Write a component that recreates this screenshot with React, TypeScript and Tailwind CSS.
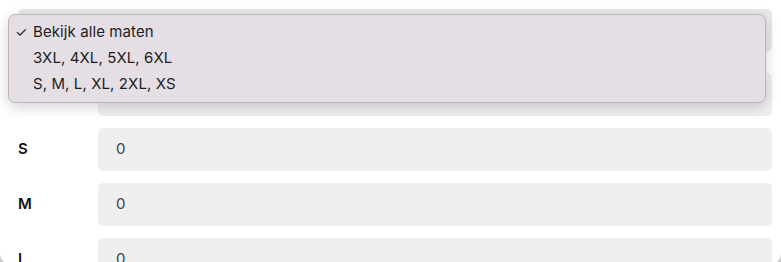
const sizes = ["S", "M", "L"];

const options = [
  { label: "Bekijk alle maten", checked: true },
  { label: "3XL, 4XL, 5XL, 6XL", checked: false },
  { label: "S, M, L, XL, 2XL, XS", checked: false },
];

function Field({ value = "" }: { value?: string }) {
  return (
    <div className="flex-1 h-[43px] rounded-[5px] bg-[#efefef] flex items-center pl-[18px] text-[15px] text-[#444]">
      {value}
    </div>
  );
}

export default function App() {
  return (
    <div className="h-[262px] w-[781px] overflow-hidden bg-[#c9c9c9]" style={{ fontFamily: "Inter, 'Noto Sans', sans-serif" }}>
      <div className="relative h-[264px] overflow-hidden bg-white rounded-b-[10px] pl-[18px] pr-[9px] pt-[9px]">
        <div className="h-[43px] rounded-[5px] bg-[#e8e8e8]" />

        <div className="mt-[21px] flex flex-col gap-[12px]">
          <div className="flex items-center">
            <div className="w-[80px]" />
            <Field />
          </div>
          {sizes.map((s) => (
            <div key={s} className="flex items-center">
              <div className="w-[80px] text-[15px] font-semibold text-[#111]">{s}</div>
              <Field value="0" />
            </div>
          ))}
        </div>

        {/* open select menu */}
        <div className="absolute left-[8px] top-[14px] w-[758px] h-[89px] rounded-[7px] border border-[#b9b5b9] bg-[#e5dfe5] shadow-[0_4px_14px_rgba(0,0,0,0.18)] pt-[4px]">
          {options.map((o) => (
            <div key={o.label} className="h-[26px] flex items-center text-[15px] tracking-[0.1px] text-[#1d1d1d]">
              <span className="w-[24px] pl-[6px] text-[14px] leading-none">{o.checked ? "✓" : ""}</span>
              <span>{o.label}</span>
            </div>
          ))}
        </div>
      </div>
    </div>
  );
}
